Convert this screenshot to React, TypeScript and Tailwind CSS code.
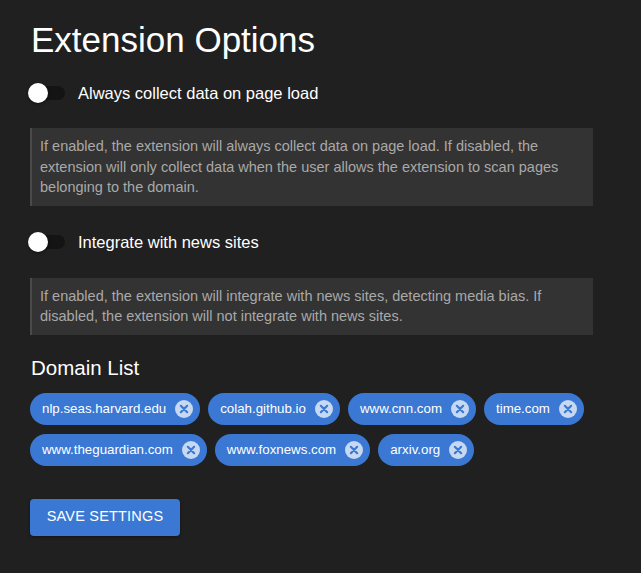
import { useState } from 'react';

const DOMAINS = [
  'nlp.seas.harvard.edu',
  'colah.github.io',
  'www.cnn.com',
  'time.com',
  'www.theguardian.com',
  'www.foxnews.com',
  'arxiv.org',
];

const Toggle = ({ on, onChange, label }: { on: boolean; onChange: (v: boolean) => void; label: string }) => (
  <label className="flex items-center cursor-pointer select-none h-[20px]">
    <span className="relative w-[37px] h-[20px] -ml-[2px] flex items-center" onClick={() => onChange(!on)}>
      <span className="absolute left-[3px] w-[34px] h-[14px] rounded-full bg-[#141414]" />
      <span
        className={`absolute top-0 w-[20px] h-[20px] rounded-full bg-white shadow-[0_1px_3px_rgba(0,0,0,0.5)] ${on ? 'left-[17px]' : 'left-0'}`}
      />
    </span>
    <span className="ml-[13px] text-[16.5px] leading-[20px] text-white">{label}</span>
  </label>
);

const Note = ({ children, className }: { children: React.ReactNode; className: string }) => (
  <div className={`${className} w-[563px] bg-[#333333] border-l-2 border-[#4a4a4a] pl-[8px] pr-[10px] py-[8px] text-[14.5px] leading-[20.5px] text-[#a9a9a9]`}>
    {children}
  </div>
);

const CloseIcon = () => (
  <svg width="18" height="18" viewBox="0 0 20 20">
    <circle cx="10" cy="10" r="10" fill="#c7d8f2" />
    <path d="M6.5 6.5 L13.5 13.5 M13.5 6.5 L6.5 13.5" stroke="#3a78d3" strokeWidth="2.4" strokeLinecap="round" />
  </svg>
);

const App = () => {
  const [collect, setCollect] = useState(false);
  const [news, setNews] = useState(false);
  const [domains, setDomains] = useState(DOMAINS);

  return (
    <div className="min-h-[573px] bg-[#202020] font-['Liberation_Sans',Arial,sans-serif] pl-[30px] pt-[18px]">
      <h1 className="text-[35px] leading-[44px] text-white ml-[1px]">Extension Options</h1>

      <div className="mt-[21px]">
        <Toggle on={collect} onChange={setCollect} label="Always collect data on page load" />
      </div>
      <Note className="mt-[25px]">
        If enabled, the extension will always collect data on page load. If disabled, the extension will only collect
        data when the user allows the extension to scan pages belonging to the domain.
      </Note>

      <div className="mt-[26px]">
        <Toggle on={news} onChange={setNews} label="Integrate with news sites" />
      </div>
      <Note className="mt-[26px]">
        If enabled, the extension will integrate with news sites, detecting media bias. If disabled, the extension will
        not integrate with news sites.
      </Note>

      <h2 className="mt-[19px] text-[20.5px] leading-[28px] text-white ml-[1px]">Domain List</h2>
      <div className="mt-[11px] flex flex-wrap gap-x-[8px] gap-y-[9px] w-[565px]">
        {domains.map((d) => (
          <div key={d} className="h-[32px] rounded-full bg-[#3a78d3] flex items-center pl-[12px] pr-[7px] text-white text-[13.3px]">
            <span>{d}</span>
            <button className="ml-[9px] flex" onClick={() => setDomains(domains.filter((x) => x !== d))}>
              <CloseIcon />
            </button>
          </div>
        ))}
      </div>

      <button className="mt-[33px] w-[150px] h-[37px] rounded-[4px] bg-[#3a78d3] text-white text-[14.5px] tracking-[0.2px] shadow-[0_1px_3px_rgba(0,0,0,0.4)]">
        SAVE SETTINGS
      </button>
    </div>
  );
};

export default App;
